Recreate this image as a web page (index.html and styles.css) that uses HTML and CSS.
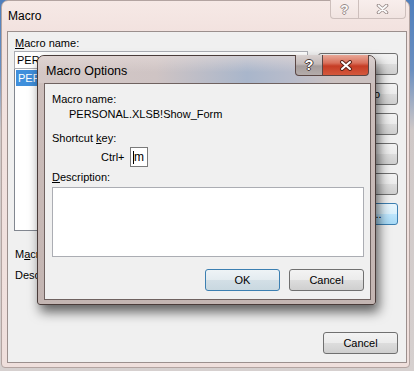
FILE: index.html
```html
<!DOCTYPE html>
<html lang="en">
<head>
    <meta charset="UTF-8">
    <meta name="viewport" content="width=device-width, initial-scale=1.0">
    <title>Macro</title>
    <link rel="stylesheet" href="styles.css">
</head>
<body>
<div class="desk">
    <div class="win">
        <div class="titlebar">
            <span class="title">Macro</span>
            <div class="caps">
                <span class="cap help">?</span>
                <span class="cap close">
                    <svg width="13" height="10" viewBox="0 0 13 10"><path d="M2.5 1.5 L10.5 8.5 M10.5 1.5 L2.5 8.5" stroke="#9a8c8a" stroke-width="3.6" stroke-linecap="round"/><path d="M2.5 1.5 L10.5 8.5 M10.5 1.5 L2.5 8.5" stroke="#fbfbfb" stroke-width="1.8" stroke-linecap="round"/></svg>
                </span>
            </div>
        </div>
        <div class="client">
            <div class="main">
                <div class="left">
                    <div class="lbl"><u>M</u>acro name:</div>
                    <div class="namebox">PERSONAL.XLSB!Show_Form</div>
                    <div class="list">
                        <div class="item sel">PERSONAL.XLSB!Show_Form</div>
                    </div>
                    <div class="lbl in">M<u>a</u>cros in:</div>
                    <div class="lbl desc">Description</div>
                </div>
                <div class="side">
                    <button class="btn">Run</button>
                    <button class="btn">Step Into</button>
                    <button class="btn">Edit</button>
                    <button class="btn">Create</button>
                    <button class="btn">Delete</button>
                    <button class="btn focus">Options...</button>
                </div>
            </div>
            <div class="foot">
                <button class="btn">Cancel</button>
            </div>
        </div>
    </div>

    <div class="dlg">
        <div class="dlg-title">
            <span class="title">Macro Options</span>
            <div class="dcaps">
                <span class="dcap help">?</span>
                <span class="dcap close">
                    <svg width="14" height="11" viewBox="0 0 14 11"><path d="M3 2 L11 9 M11 2 L3 9" stroke="#5a2418" stroke-width="4" stroke-linecap="round"/><path d="M3 2 L11 9 M11 2 L3 9" stroke="#ffffff" stroke-width="2" stroke-linecap="round"/></svg>
                </span>
            </div>
        </div>
        <div class="dlg-client">
            <div class="row">Macro name:</div>
            <div class="row value">PERSONAL.XLSB!Show_Form</div>
            <div class="row gap">Shortcut <u>k</u>ey:</div>
            <div class="keyrow">
                <span class="ctrl">Ctrl+</span>
                <span class="keybox"><span class="caret"></span>m</span>
            </div>
            <div class="row dlabel"><u>D</u>escription:</div>
            <div class="textarea"></div>
            <div class="buttons">
                <button class="btn default">OK</button>
                <button class="btn">Cancel</button>
            </div>
        </div>
    </div>
</div>
</body>
</html>
```

FILE: styles.css
```css
body {
    margin: 0;
    font-family: "Liberation Sans", Arial, sans-serif;
    font-size: 11px;
    color: #000;
}
.desk {
    position: relative;
    width: 414px;
    height: 371px;
    overflow: hidden;
    background: linear-gradient(180deg, #4f7fbd 0, #6b8fc0 70px, #cfc8c7 130px, #d6d0cf 371px);
}

/* outer Macro window */
.win {
    box-sizing: border-box;
    margin-left: 1px;
    width: 409px;
    height: 368px;
    border: 1px solid #b3a4a1;
    border-radius: 7px 7px 4px 4px;
    background: linear-gradient(180deg, #f6e9e6 0, #f2e2df 30px, #efdfdc 100%);
    display: flex;
    flex-direction: column;
}
.titlebar {
    height: 30px;
    display: flex;
    align-items: center;
    justify-content: space-between;
    padding-left: 6px;
    position: relative;
}
.title {
    font-size: 12px;
    color: #000;
}
.caps {
    position: absolute;
    top: -1px;
    right: 3px;
    display: flex;
}
.cap {
    box-sizing: border-box;
    height: 19px;
    display: flex;
    align-items: center;
    justify-content: center;
    border: 1px solid #cdbfbc;
    border-top: none;
    background: linear-gradient(180deg, #f8eeec, #f1e4e1);
}
.cap.help {
    width: 29px;
    border-radius: 0 0 0 4px;
    font-weight: bold;
    font-size: 13px;
    color: #fbfbfb;
    text-shadow: -1px 0 #9a8c8a, 1px 0 #9a8c8a, 0 -1px #9a8c8a, 0 1px #9a8c8a;
}
.cap.close {
    width: 47px;
    border-left: none;
    border-radius: 0 0 4px 0;
}

.client {
    box-sizing: border-box;
    width: 400px;
    height: 332px;
    margin-left: 5px;
    border: 1px solid #9b8f8d;
    background: #f0f0f0;
    display: flex;
    flex-direction: column;
}
.main {
    display: grid;
    grid-template-columns: 1fr 80px;
    column-gap: 10px;
    padding: 3px 8px 0 6px;
}
.lbl {
    height: 16px;
    line-height: 16px;
    padding-left: 1px;
}
.lbl.in {
    margin-top: 15px;
}
.lbl.desc {
    margin-top: 5px;
}
.namebox {
    box-sizing: border-box;
    height: 18px;
    border: 1px solid #abadb3;
    background: #fff;
    padding: 0 2px;
    line-height: 16px;
}
.list {
    box-sizing: border-box;
    height: 162px;
    border: 1px solid #828790;
    border-top: none;
    background: #fff;
    padding: 1px;
}
.item {
    height: 16px;
    line-height: 16px;
    padding-left: 2px;
}
.item.sel {
    background: #3f8fdc;
    color: #fff;
}
.side {
    display: flex;
    flex-direction: column;
    gap: 8px;
    padding-top: 18px;
}
.side .btn {
    width: 80px;
}
.btn {
    box-sizing: border-box;
    width: 75px;
    height: 22px;
    padding: 0;
    border: 1px solid #707070;
    border-radius: 3px;
    background: linear-gradient(180deg, #f3f3f3 0, #ebebeb 50%, #dddddd 50%, #cfcfcf 100%);
    font-family: "Liberation Sans", Arial, sans-serif;
    font-size: 11px;
    color: #000;
}
.btn.focus {
    border-color: #3c7fb1;
    background: linear-gradient(180deg, #eaf6fd 0, #d9f0fc 50%, #bee6fd 50%, #a7d9f5 100%);
}
.btn.default {
    border-color: #3c7fb1;
    background: linear-gradient(180deg, #eef3f6 0, #e3ebf0 50%, #d3dfe6 50%, #c9d8e0 100%);
}
.foot {
    margin-top: auto;
    display: flex;
    justify-content: flex-end;
    padding: 0 8px 8px 0;
}

/* Macro Options dialog lying over the Macro window */
.dlg {
    position: absolute;
    left: 37px;
    top: 55px;
    box-sizing: border-box;
    width: 339px;
    height: 250px;
    border: 1px solid #4a3c3a;
    border-radius: 7px 7px 3px 3px;
    background: linear-gradient(180deg, #cdbfbc 0, #c3b5b2 100%);
    box-shadow: 3px 7px 12px rgba(0, 0, 0, 0.6);
}
.dlg-title {
    position: relative;
    height: 27px;
    display: flex;
    align-items: center;
    padding-left: 8px;
    border-radius: 6px 6px 0 0;
    background:
        linear-gradient(180deg, rgba(230, 220, 218, 0.6) 0, rgba(230, 220, 218, 0) 60%),
        linear-gradient(90deg, #d4c8c6 0, #cfc4c4 35%, #a9b6cb 62%, #b8bccb 75%, #cbc1c0 88%);
}
.dlg-title .title {
    font-size: 12.5px;
    padding-top: 2px;
}
.dcaps {
    position: absolute;
    top: -1px;
    right: 6px;
    display: flex;
}
.dcap {
    box-sizing: border-box;
    height: 21px;
    display: flex;
    align-items: center;
    justify-content: center;
    border: 1px solid #5a4644;
    border-top: none;
}
.dcap.help {
    width: 28px;
    border-radius: 0 0 0 4px;
    background: linear-gradient(180deg, #d9d1d0 0, #c3bab9 45%, #a59c9b 55%, #b4acab 100%);
    font-weight: bold;
    font-size: 14px;
    color: #fff;
    text-shadow: -1px 0 #4a3c3a, 1px 0 #4a3c3a, 0 -1px #4a3c3a, 0 1px #4a3c3a;
}
.dcap.close {
    width: 46px;
    border-left: none;
    border-radius: 0 0 4px 0;
    background: linear-gradient(180deg, #e8a797 0, #d9705b 40%, #c63d25 55%, #d4583c 100%);
}
.dlg-client {
    box-sizing: border-box;
    width: 327px;
    height: 217px;
    margin-left: 6px;
    border: 1px solid #6f6260;
    background: #f0f0f0;
    padding: 8px 6px 0 7px;
}
.row {
    height: 15px;
    line-height: 15px;
}
.row.value {
    margin-left: 17px;
}
.row.gap {
    margin-top: 9px;
}
.keyrow {
    display: flex;
    align-items: center;
    margin-top: 1px;
    height: 20px;
}
.ctrl {
    margin-left: 49px;
    width: 29px;
}
.keybox {
    box-sizing: border-box;
    width: 18px;
    height: 20px;
    border: 1px solid #7a7a7a;
    background: #fff;
    display: flex;
    align-items: center;
    padding-left: 2px;
    font-size: 12px;
}
.caret {
    width: 1px;
    height: 13px;
    background: #000;
}
.row.dlabel {
    margin-top: 3px;
}
.textarea {
    box-sizing: border-box;
    width: 312px;
    height: 70px;
    margin-top: 2px;
    border: 1px solid #abadb3;
    background: #fff;
}
.buttons {
    display: flex;
    justify-content: flex-end;
    gap: 9px;
    margin-top: 12px;
}
```
